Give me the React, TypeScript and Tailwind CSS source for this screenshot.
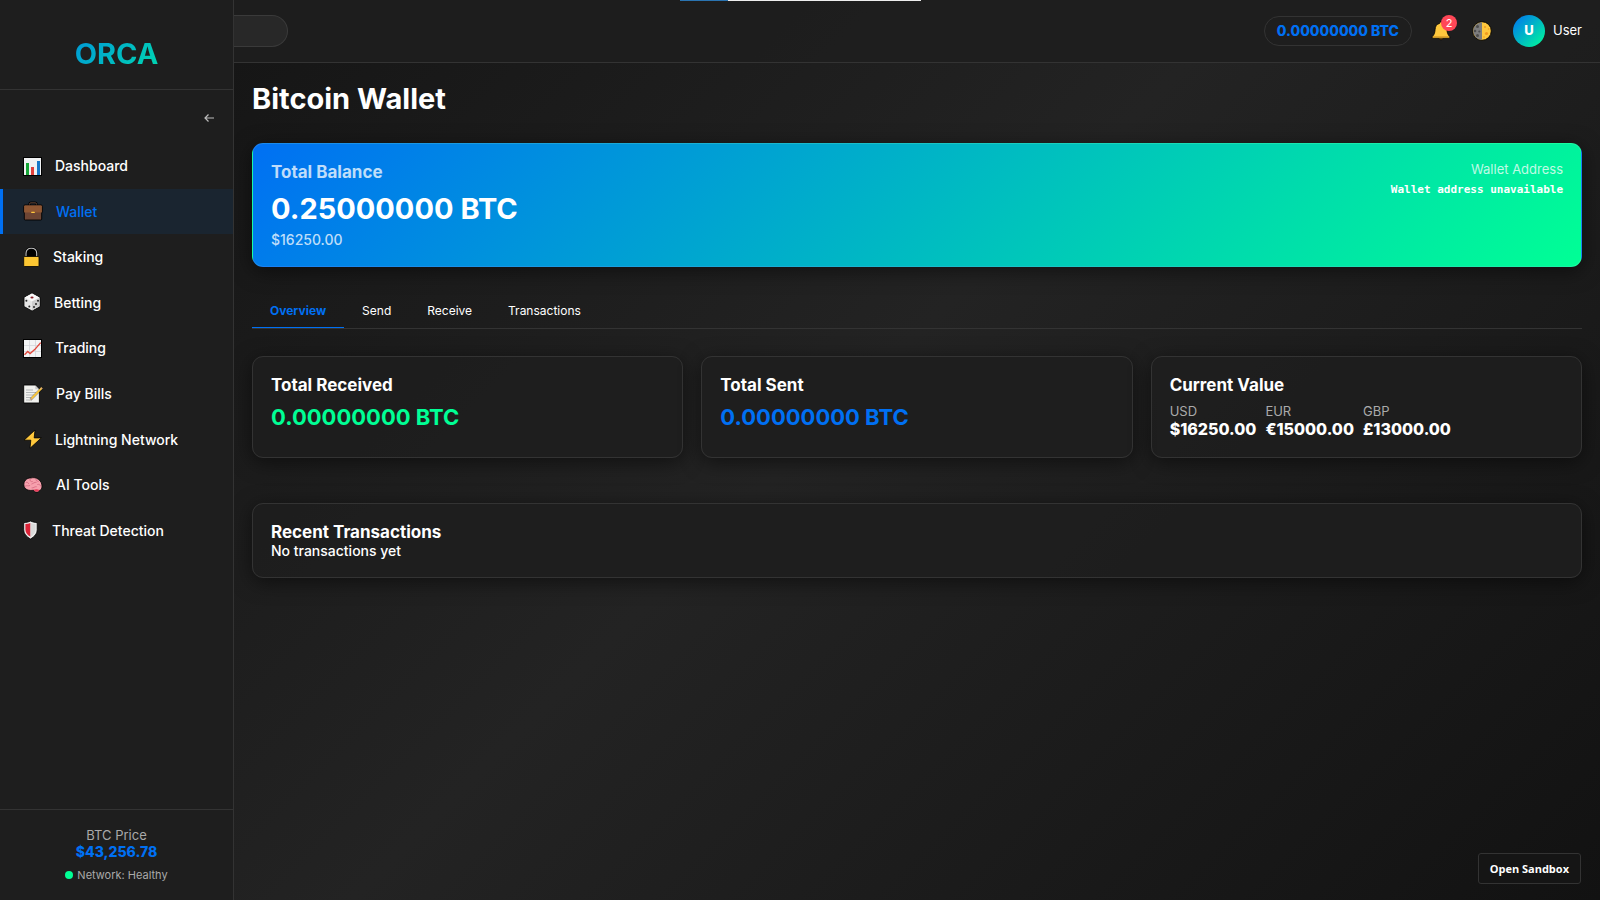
import type { ReactNode } from "react";

const navItems: { label: string; icon: ReactNode; active?: boolean }[] = [
  { label: "Dashboard", icon: <ChartIcon /> },
  { label: "Wallet", icon: <BriefcaseIcon />, active: true },
  { label: "Staking", icon: <LockIcon /> },
  { label: "Betting", icon: <DieIcon /> },
  { label: "Trading", icon: <TrendIcon /> },
  { label: "Pay Bills", icon: <MemoIcon /> },
  { label: "Lightning Network", icon: <BoltIcon /> },
  { label: "AI Tools", icon: <BrainIcon /> },
  { label: "Threat Detection", icon: <ShieldIcon /> },
];

const tabs = ["Overview", "Send", "Receive", "Transactions"];

const values = [
  { currency: "USD", amount: "$16250.00" },
  { currency: "EUR", amount: "€15000.00" },
  { currency: "GBP", amount: "£13000.00" },
];

function ChartIcon() {
  return (
    <svg width="19" height="20" viewBox="0 0 19 20" aria-hidden="true">
      <rect x="0.5" y="1.5" width="18" height="18" fill="#f1f2f3" stroke="#000" />
      <rect x="3" y="7" width="3" height="12" fill="#16a637" />
      <rect x="8" y="11" width="3" height="8" fill="#e0403c" />
      <rect x="14" y="5" width="3" height="14" fill="#1878c8" />
    </svg>
  );
}

function BriefcaseIcon() {
  return (
    <svg width="20" height="20" viewBox="0 0 20 20" aria-hidden="true">
      <path d="M6.500 4.500V3q0-1.500 1.500-1.500h4q1.500 0 1.500 1.500v1.500" fill="none" stroke="#000" strokeWidth="2.200" />
      <path d="M6.500 4.500V3q0-1.200 1.500-1.200h4q1.500 0 1.500 1.200v1.500" fill="none" stroke="#6b4a3a" strokeWidth=".9" />
      <path d="M2 4h16q1.300 0 1.300 1.300V11l-.6 1v6q0 1-1 1H2.300q-1 0-1-1v-6l-.6-1V5.300Q.7 4 2 4z" fill="#6d4534" stroke="#000" strokeWidth=".9" />
      <path d="M2 4.500h16q.8 0 .8.800v5q0 1.200-1.200 1.200H2.400q-1.200 0-1.200-1.200v-5q0-.8.800-.8z" fill="#8f5733" />
      <rect x="8.200" y="10.800" width="3.600" height="1.300" rx=".5" fill="#ffc83d" />
    </svg>
  );
}

function LockIcon() {
  return (
    <svg width="17" height="20" viewBox="0 0 17 20" aria-hidden="true">
      <path d="M3 10V6.500C3 3 5 1 8.300 1s5.400 2 5.400 5.500V10z" fill="#000" stroke="#000" strokeWidth="2" />
      <path d="M3 10V6.500C3 3 5 1.300 8.300 1.300s5.400 1.700 5.400 5.200V10" fill="none" stroke="#bdbdbd" strokeWidth="1.100" />
      <rect x="0.7" y="9.500" width="15.300" height="10" rx="1" fill="#fcc632" stroke="#000" strokeWidth=".8" />
    </svg>
  );
}

function DieIcon() {
  return (
    <svg width="18" height="20" viewBox="0 0 18 20" aria-hidden="true">
      <path d="M9 1l8 4.3v9.2L9 19l-8-4.5V5.3z" fill="#e6e6e6" stroke="#000" strokeWidth=".8" strokeLinejoin="round" />
      <path d="M9 1.5l7.3 4L9 9.5l-7.3-4z" fill="#fafafa" />
      <path d="M16.5 5.8v8.5L9 18.5v-9z" fill="#cfcfcf" />
      <ellipse cx="9" cy="5.4" rx="1.6" ry="1" fill="#8a202a" />
      <g fill="#272727">
        <circle cx="3.4" cy="8.8" r="1" />
        <circle cx="6.3" cy="14.4" r="1" />
        <circle cx="11" cy="15" r="1" />
        <circle cx="13" cy="12" r="1" />
        <circle cx="15" cy="8.8" r="1" />
      </g>
    </svg>
  );
}

function TrendIcon() {
  return (
    <svg width="19" height="20" viewBox="0 0 19 20" aria-hidden="true">
      <rect x="0.5" y="1.500" width="18" height="18" fill="#f3f4f5" stroke="#000" />
      <path d="M6.5 2v17M12.5 2v17M1 7.5h17M1 13.500h17" stroke="#d3d6da" strokeWidth=".8" />
      <path d="M1.5 16.8l3.2-3.4 2.4 2.2 4.6-4 6-7" fill="none" stroke="#e2483c" strokeWidth="1.4" />
    </svg>
  );
}

function MemoIcon() {
  return (
    <svg width="20" height="20" viewBox="0 0 20 20" aria-hidden="true">
      <path d="M.7 1h11.8l3.9 4v14H.7z" fill="#f1f1ee" stroke="#000" strokeWidth=".9" />
      <path d="M12.3 1.5v3.7h3.6z" fill="#c9c9c9" />
      <path d="M3 6h7M3 8.5h10M3 11h9M3 13.5h7M3 16h6" stroke="#a5a8aa" strokeWidth=".8" />
      <path d="M18.7 4.3L7.6 15.6" stroke="#000" strokeWidth="2.8" opacity=".35" />
      <path d="M18.9 3.9L8.2 14.9" stroke="#fbc637" strokeWidth="1.9" />
      <path d="M8.7 13.7l-2.3 3 3.3-2z" fill="#d9a877" />
      <path d="M17.9 4.9l1-1" stroke="#d9a877" strokeWidth="1.9" />
    </svg>
  );
}

function BoltIcon() {
  return (
    <svg width="19" height="20" viewBox="0 0 19 20" aria-hidden="true">
      <path d="M12 1L1 11.200h6.800L7 19.300 18.300 8.900h-7.100z" fill="#ffc83d" stroke="#000" strokeWidth=".8" strokeLinejoin="round" />
    </svg>
  );
}

function BrainIcon() {
  return (
    <svg width="20" height="20" viewBox="0 0 20 20" aria-hidden="true">
      <path d="M1 11C0 6 4 2.6 8 3c5-1.7 11 2.5 11 8 0 3-1 4-2.4 4.3-.6 2.3-5 2.4-6-.1C6 16 2 14.8 1 11z" fill="#f6a0ad" stroke="#000" strokeWidth=".8" />
      <path d="M10.7 14.8c1.3-1 4.2-.8 5.7.4-.8 2-4.7 2-5.7-.4z" fill="#e83f5d" />
      <path d="M3.2 7.4c1.3-.4 2 .2 2.5 1.3M7 4.2c-.4 1.8.8 2.6 2.3 2.4M2 11.2c2.2-1.3 3.4.3 4.8-.6M8.8 9c1.8-.6 2.5-2 4.3-1.7M13 4.2c-.4 1.4.8 2 2.3 2.1M14.7 9.4c1.1-.4 2.5.2 3 1.6M9 13c1.8.3 2.3-1.7 4.3-1.3" fill="none" stroke="#d76d83" strokeWidth=".9" strokeLinecap="round" />
    </svg>
  );
}

function ShieldIcon() {
  return (
    <svg width="16" height="20" viewBox="0 0 16 20" aria-hidden="true">
      <path d="M7.5 1C10 2.1 12.2 2.4 14.2 2.7v6.8c0 4.2-2.7 7.2-6.7 9.5-4-2.3-6.8-5.3-6.8-9.5V2.7C3 2.4 5.2 2.1 7.5 1z" fill="#eee" stroke="#000" strokeWidth=".8" />
      <path d="M7.5 3v13.8C4 14.7 2.4 12.4 2.4 9.5V4.1C4.2 3.9 6 3.6 7.5 3z" fill="#dc2438" />
      <path d="M7.5 3v13.8c3.3-2.1 5-4.4 5-7.3V4.1C10.7 3.9 9 3.6 7.5 3z" fill="#dadada" />
    </svg>
  );
}

function BellIcon() {
  return (
    <svg width="20" height="20" viewBox="0 0 20 20" aria-hidden="true">
      <path d="M7.6 16.5h4.8c0 3-4.8 3-4.8 0z" fill="#d18b18" stroke="#000" strokeWidth=".8" />
      <path d="M10 1c-1.2 0-1.5.7-1.5 1.5C5.5 3 4.3 5.5 4.1 8.500c-.2 3.300-1 5.500-2.900 7.300v1.400h17.600v-1.400c-1.900-1.800-2.700-4-2.900-7.300-.2-3-1.400-5.500-4.400-6C11.500 1.700 11.200 1 10 1z" fill="#ffc83d" stroke="#000" strokeWidth=".8" />
      <path d="M1.8 15.8h16.4" stroke="#d99a24" strokeWidth="1" />
    </svg>
  );
}

function MoonIcon() {
  return (
    <svg width="20" height="20" viewBox="0 0 20 20" aria-hidden="true">
      <circle cx="10" cy="10" r="9.3" fill="#ffc83d" stroke="#000" strokeWidth=".9" />
      <path d="M10 1.2a8.8 8.8 0 000 17.6z" fill="#7d7d7d" />
      <g fill="#4d4d4d">
        <circle cx="5.5" cy="5.5" r="1.5" />
        <circle cx="3" cy="10" r="1.3" />
        <circle cx="7.3" cy="10.5" r="1.1" />
        <circle cx="5.5" cy="14.5" r="1.5" />
      </g>
      <g fill="#f19b20">
        <circle cx="14.5" cy="12.5" r="1.6" />
        <circle cx="13" cy="6" r="1" />
        <circle cx="16.5" cy="8" r=".8" />
        <circle cx="12" cy="16" r=".8" />
      </g>
    </svg>
  );
}

function Card({ title, children }: { title: string; children: ReactNode }) {
  return (
    <section className="rounded-[11px] border border-[#333] bg-[#1e1e1e]/90 p-[18px] shadow-[0_4px_20px_rgba(0,0,0,0.5)]">
      <h3 className="text-[17px] leading-5 font-bold">{title}</h3>
      {children}
    </section>
  );
}

function Sidebar() {
  return (
    <aside className="sticky top-0 flex h-screen w-[234px] shrink-0 flex-col border-r border-[#333] bg-[#1e1e1e]">
      <div className="flex h-[90px] flex-col justify-end border-b border-[#333] pb-[18px]">
        <div className="bg-linear-[135deg,#0070f3,#00ff95] bg-clip-text text-center text-[29px] leading-[35px] font-bold text-transparent">
          ORCA
        </div>
      </div>
      <div className="flex h-[53px] items-center justify-end pt-0.5 pr-[18px]">
        <button type="button" aria-label="Collapse sidebar" className="flex text-[#bbb]">
          <svg width="12" height="12" viewBox="0 0 12 12" fill="none" stroke="currentColor" strokeWidth="1.2" aria-hidden="true">
            <path d="M11 6H2M5.5 2.500L2 6l3.500 3.500" />
          </svg>
        </button>
      </div>
      <nav className="grid h-[410px] shrink-0 auto-rows-fr">
        {navItems.map((item) => (
          <a
            key={item.label}
            href="#"
            className={
              item.active
                ? "flex items-center gap-[13px] border-l-3 border-[#0070f3] bg-[#1a2530] pl-5 text-[14px] font-medium text-[#0070f3]"
                : "flex items-center gap-[13px] border-l-3 border-transparent pl-5 text-[14px] font-medium"
            }
          >
            {item.icon}
            {item.label}
          </a>
        ))}
      </nav>
      <div className="mt-auto border-t border-[#333] px-[18px] pt-[18px] pb-[17px] text-center">
        <div className="text-[13px] leading-[15px] text-[#aaa]">BTC Price</div>
        <div className="text-[14px] leading-[18px] font-extrabold text-[#0070f3]">$43,256.78</div>
        <div className="mt-1.5 flex items-center justify-center gap-1 text-[11px] leading-4 text-[#aaa]">
          <span className="size-2 rounded-full bg-[#00ff95]" />
          Network: Healthy
        </div>
      </div>
    </aside>
  );
}

function Header() {
  return (
    <header className="flex h-[63px] items-center justify-between border-b border-[#333] bg-[#1e1e1e]/90 pr-[18px]">
      <input
        type="search"
        aria-label="Search"
        className="h-8 w-[54px] rounded-r-full border border-l-0 border-[#3a3a3a] bg-[#282828] px-3 text-[13px] outline-none"
      />
      <div className="flex items-center">
        <div className="rounded-full border border-[#333] px-3 py-[5px] text-[14px] leading-[18px] font-extrabold text-[#0070f3]">
          0.00000000 BTC
        </div>
        <button type="button" aria-label="Notifications" className="relative ml-[19px]">
          <BellIcon />
          <span className="absolute -top-1.5 -right-1.5 flex size-4 items-center justify-center rounded-full bg-[#ff4757] text-[11px] text-white">
            2
          </span>
        </button>
        <button type="button" aria-label="Toggle theme" className="ml-[21px]">
          <MoonIcon />
        </button>
        <div className="ml-[21px] flex size-8 items-center justify-center rounded-full bg-linear-[135deg,#0070f3,#00ff95] text-[13px] font-extrabold">
          U
        </div>
        <span className="ml-2 text-[13px]">User</span>
      </div>
    </header>
  );
}

export default function App() {
  return (
    <div className="flex min-h-screen bg-linear-[135deg,#121212,#232323_50%,#121212] font-['Inter',sans-serif] text-white">
      <div className="fixed top-0 left-[680px] z-10 flex h-px w-[241px] bg-[#eee]">
        <div className="w-1/5 bg-[#2a73b0]" />
      </div>
      <Sidebar />
      <div className="min-w-0 flex-1">
        <Header />
        <main className="px-[18px] pt-[18px]">
          <h1 className="text-[29px] leading-[35px] font-bold">Bitcoin Wallet</h1>

          <section className="mt-[27px] flex justify-between rounded-[11px] border border-white/10 bg-linear-[135deg,#0070f3,#00ff95] p-[18px] shadow-[0_4px_20px_rgba(0,0,0,0.5)]">
            <div>
              <h3 className="text-[17px] leading-5 font-bold text-white/75">Total Balance</h3>
              <div className="mt-[9px] text-[29px] leading-[35px] font-bold">0.25000000 BTC</div>
              <div className="mt-[5px] text-[14px] leading-[17px] font-medium text-white/75">$16250.00</div>
            </div>
            <div className="text-right">
              <div className="text-[13px] leading-[15px] text-white/75">Wallet Address</div>
              <div className="mt-[5px] font-['DejaVu_Sans_Mono',monospace] text-[11px] leading-4 font-bold">
                Wallet address unavailable
              </div>
            </div>
          </section>

          <div role="tablist" className="mt-[27px] flex border-b border-[#333]">
            {tabs.map((tab, i) => (
              <button
                key={tab}
                type="button"
                role="tab"
                aria-selected={i === 0}
                className={
                  i === 0
                    ? "border-b border-[#0070f3] px-[18px] pt-[9px] pb-2 text-[12px] leading-4 font-bold text-[#0070f3]"
                    : "border-b border-transparent px-[18px] pt-[9px] pb-2 text-[12px] leading-4"
                }
              >
                {tab}
              </button>
            ))}
          </div>

          <div className="mt-[27px] grid grid-cols-3 gap-[18px]">
            <Card title="Total Received">
              <div className="mt-[9px] text-[22px] leading-[26px] font-bold text-[#00ff95]">0.00000000 BTC</div>
            </Card>
            <Card title="Total Sent">
              <div className="mt-[9px] text-[22px] leading-[26px] font-bold text-[#0070f3]">0.00000000 BTC</div>
            </Card>
            <Card title="Current Value">
              <div className="mt-[9px] flex gap-[9px]">
                {values.map((v) => (
                  <div key={v.currency}>
                    <div className="text-[13px] leading-[15px] text-[#aaa]">{v.currency}</div>
                    <div className="text-[16px] leading-5 font-extrabold">{v.amount}</div>
                  </div>
                ))}
              </div>
            </Card>
          </div>

          <div className="mt-[45px]">
            <Card title="Recent Transactions">
              <p className="text-[14px] leading-[17px] font-medium">No transactions yet</p>
            </Card>
          </div>
        </main>
      </div>
      <button
        type="button"
        className="fixed right-[19px] bottom-4 rounded-[3px] border border-[#333] bg-[#151515] px-[11px] py-1.5 font-['Open_Sans',sans-serif] text-[11px] leading-[17px] font-bold"
      >
        Open Sandbox
      </button>
    </div>
  );
}
